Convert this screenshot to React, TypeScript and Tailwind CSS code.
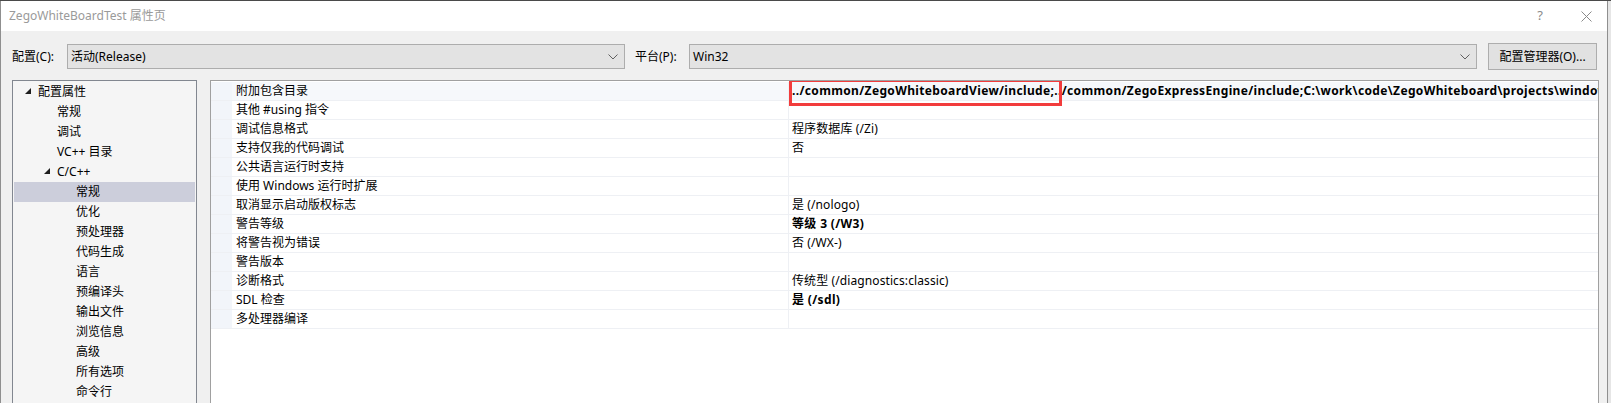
import React from "react";

const treeItems: { label: string; level: number; expanded?: boolean; selected?: boolean }[] = [
  { label: "配置属性", level: 0, expanded: true },
  { label: "常规", level: 1 },
  { label: "调试", level: 1 },
  { label: "VC++ 目录", level: 1 },
  { label: "C/C++", level: 1, expanded: true },
  { label: "常规", level: 2, selected: true },
  { label: "优化", level: 2 },
  { label: "预处理器", level: 2 },
  { label: "代码生成", level: 2 },
  { label: "语言", level: 2 },
  { label: "预编译头", level: 2 },
  { label: "输出文件", level: 2 },
  { label: "浏览信息", level: 2 },
  { label: "高级", level: 2 },
  { label: "所有选项", level: 2 },
  { label: "命令行", level: 2 },
];

const props: { name: string; value: string; bold?: boolean }[] = [
  {
    name: "附加包含目录",
    value:
      "../common/ZegoWhiteboardView/include;../common/ZegoExpressEngine/include;C:\\work\\code\\ZegoWhiteboard\\projects\\windows\\include;%(AdditionalIncludeDirectories)",
    bold: true,
  },
  { name: "其他 #using 指令", value: "" },
  { name: "调试信息格式", value: "程序数据库 (/Zi)" },
  { name: "支持仅我的代码调试", value: "否" },
  { name: "公共语言运行时支持", value: "" },
  { name: "使用 Windows 运行时扩展", value: "" },
  { name: "取消显示启动版权标志", value: "是 (/nologo)" },
  { name: "警告等级", value: "等级 3 (/W3)", bold: true },
  { name: "将警告视为错误", value: "否 (/WX-)" },
  { name: "警告版本", value: "" },
  { name: "诊断格式", value: "传统型 (/diagnostics:classic)" },
  { name: "SDL 检查", value: "是 (/sdl)", bold: true },
  { name: "多处理器编译", value: "" },
];

const font = "font-['Noto_Sans','Noto_Sans_CJK_SC',sans-serif]";

const Chevron = () => (
  <svg width="10" height="6" viewBox="0 0 10 6" className="shrink-0">
    <path d="M0.5 0.5 L5 5 L9.5 0.5" fill="none" stroke="#606060" strokeWidth="1" />
  </svg>
);

const Expander = () => (
  <svg width="6" height="6" viewBox="0 0 6 6">
    <polygon points="6,0 6,6 0,6" fill="#1e1e1e" />
  </svg>
);

const App: React.FC = () => {
  return (
    <div className={`w-[1611px] h-[403px] overflow-hidden bg-[#e6e6e6] border-t border-[#4a4a4a] ${font} text-[12px] text-black`}>
      <div className="w-[1608px] h-full border-r border-l border-[#8f8f8f] flex flex-col bg-[#f0f0f0]">
        {/* title bar */}
        <div className="h-[30px] shrink-0 bg-white flex items-center">
          <span className="pl-[8px] text-[12px] text-[#9a9a9a] leading-none">ZegoWhiteBoardTest 属性页</span>
          <div className="ml-auto flex items-center">
            <span className="text-[13px] text-[#8a8a8a] mr-[38px]">?</span>
            <svg width="11" height="11" viewBox="0 0 11 11" className="mr-[15px]">
              <path d="M0.5 0.5 L10.5 10.5 M10.5 0.5 L0.5 10.5" stroke="#8a8a8a" strokeWidth="1" />
            </svg>
          </div>
        </div>

        {/* configuration row */}
        <div className="h-[49px] shrink-0 flex items-start pt-[13px] pl-[11px]">
          <span className="w-[55px] h-[25px] flex items-center">配置(C):</span>
          <div className="w-[558px] h-[25px] bg-[#e3e3e3] border border-[#adadad] flex items-center pl-[3px] pr-[6px]">
            <span className="flex-1">活动(Release)</span>
            <Chevron />
          </div>
          <span className="ml-[10px] w-[54px] h-[25px] flex items-center">平台(P):</span>
          <div className="w-[788px] h-[25px] bg-[#e3e3e3] border border-[#adadad] flex items-center pl-[3px] pr-[6px]">
            <span className="flex-1">Win32</span>
            <Chevron />
          </div>
          <button className="ml-[11px] -mt-[1px] w-[109px] h-[27px] bg-[#e1e1e1] border border-[#adadad] flex items-center justify-center">
            配置管理器(O)...
          </button>
        </div>

        {/* panels */}
        <div className="flex-1 flex pl-[11px] min-h-0">
          {/* tree */}
          <div className="w-[185px] h-[400px] shrink-0 border border-[#828790] bg-[#f5f5f5] p-px">
            {treeItems.map((it, i) => {
              const textLeft = 24 + it.level * 19;
              return (
                <div
                  key={i}
                  className={`h-[20px] flex items-center relative ${it.selected ? "bg-[#cccedb]" : ""}`}
                >
                  {it.expanded && (
                    <span className="absolute top-[6px]" style={{ left: textLeft - 13 }}>
                      <Expander />
                    </span>
                  )}
                  <span className="whitespace-nowrap" style={{ paddingLeft: textLeft }}>
                    {it.label}
                  </span>
                </div>
              );
            })}
          </div>

          {/* property grid */}
          <div className="ml-[13px] w-[1389px] h-[400px] shrink-0 border border-[#a0a0a0] bg-white pt-px relative overflow-hidden">
            {props.map((p, i) => (
              <div
                key={i}
                className={`h-[19px] flex border-b border-[#eef0f4] ${i === 0 ? "bg-[#f6f8fb]" : ""}`}
              >
                <div className="w-[21px] shrink-0 bg-[#f2f5fa]" />
                <div className="w-[557px] shrink-0 pl-[4px] flex items-center whitespace-nowrap border-r border-[#eef0f4]">
                  {p.name}
                </div>
                <div className={`flex-1 min-w-0 pl-[3px] flex items-center whitespace-nowrap overflow-hidden ${p.bold ? "font-bold tracking-[0.35px]" : "tracking-[0.1px]"}`}>
                  {p.value}
                </div>
              </div>
            ))}
            {/* red annotation box */}
            <div className="absolute left-[578px] -top-[2px] w-[273px] h-[27px] border-[3px] border-[#f23c3c]" />
          </div>
        </div>
      </div>
    </div>
  );
};

export default App;
